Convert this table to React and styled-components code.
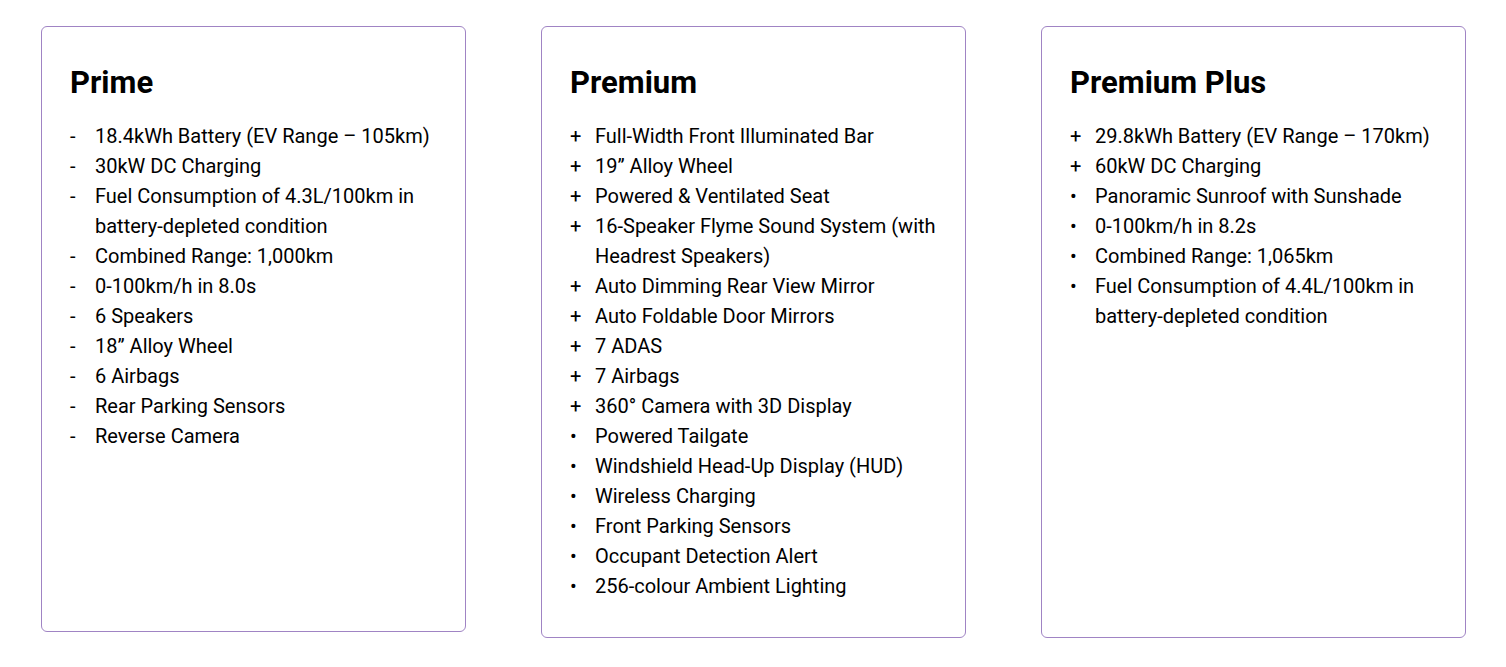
import React from "react";
import styled, { createGlobalStyle } from "styled-components";

const plans = [
  {
    name: "Prime",
    short: true,
    items: [
      ["-", "18.4kWh Battery (EV Range – 105km)"],
      ["-", "30kW DC Charging"],
      ["-", "Fuel Consumption of 4.3L/100km in battery-depleted condition"],
      ["-", "Combined Range: 1,000km"],
      ["-", "0-100km/h in 8.0s"],
      ["-", "6 Speakers"],
      ["-", "18” Alloy Wheel"],
      ["-", "6 Airbags"],
      ["-", "Rear Parking Sensors"],
      ["-", "Reverse Camera"],
    ],
  },
  {
    name: "Premium",
    items: [
      ["+", "Full-Width Front Illuminated Bar"],
      ["+", "19” Alloy Wheel"],
      ["+", "Powered & Ventilated Seat"],
      ["+", "16-Speaker Flyme Sound System (with Headrest Speakers)"],
      ["+", "Auto Dimming Rear View Mirror"],
      ["+", "Auto Foldable Door Mirrors"],
      ["+", "7 ADAS"],
      ["+", "7 Airbags"],
      ["+", "360° Camera with 3D Display"],
      ["•", "Powered Tailgate"],
      ["•", "Windshield Head-Up Display (HUD)"],
      ["•", "Wireless Charging"],
      ["•", "Front Parking Sensors"],
      ["•", "Occupant Detection Alert"],
      ["•", "256-colour Ambient Lighting"],
    ],
  },
  {
    name: "Premium Plus",
    items: [
      ["+", "29.8kWh Battery (EV Range – 170km)"],
      ["+", "60kW DC Charging"],
      ["•", "Panoramic Sunroof with Sunshade"],
      ["•", "0-100km/h in 8.2s"],
      ["•", "Combined Range: 1,065km"],
      ["•", "Fuel Consumption of 4.4L/100km in battery-depleted condition"],
    ],
  },
];

const App = () => {
  return (
    <>
      <GlobalStyle />
      <Grid>
        {plans.map((plan) => (
          <Card key={plan.name} $short={plan.short}>
            <Title>{plan.name}</Title>
            <List>
              {plan.items.map(([mark, text]) => (
                <Item key={text}>
                  <Marker>{mark}</Marker>
                  <span>{text}</span>
                </Item>
              ))}
            </List>
          </Card>
        ))}
      </Grid>
    </>
  );
};

const GlobalStyle = createGlobalStyle`
  body {
    margin: 0;
    background: #fff;
    font-family: Roboto, "Liberation Sans", sans-serif;
    color: #000;
  }
`;

const Grid = styled.main`
  display: grid;
  grid-template-columns: repeat(3, 425px);
  column-gap: 75px;
  align-items: stretch;
  padding: 26px 40px 0 41px;
`;

const Card = styled.section`
  border: 1px solid #a084c4;
  border-radius: 6px;
  padding: 37px 27px 36px 28px;
  margin-bottom: ${(p) => (p.$short ? "6px" : "0")};
`;

const Title = styled.h2`
  margin: 0 0 20px;
  font-size: 31px;
  line-height: 37px;
  font-weight: 700;
  color: #000;
`;

const List = styled.ul`
  list-style: none;
  margin: 0;
  padding: 0;
`;

const Item = styled.li`
  display: flex;
  font-size: 20px;
  line-height: 30px;
  color: #000;
`;

const Marker = styled.span`
  flex: 0 0 25px;
`;

export default App;
